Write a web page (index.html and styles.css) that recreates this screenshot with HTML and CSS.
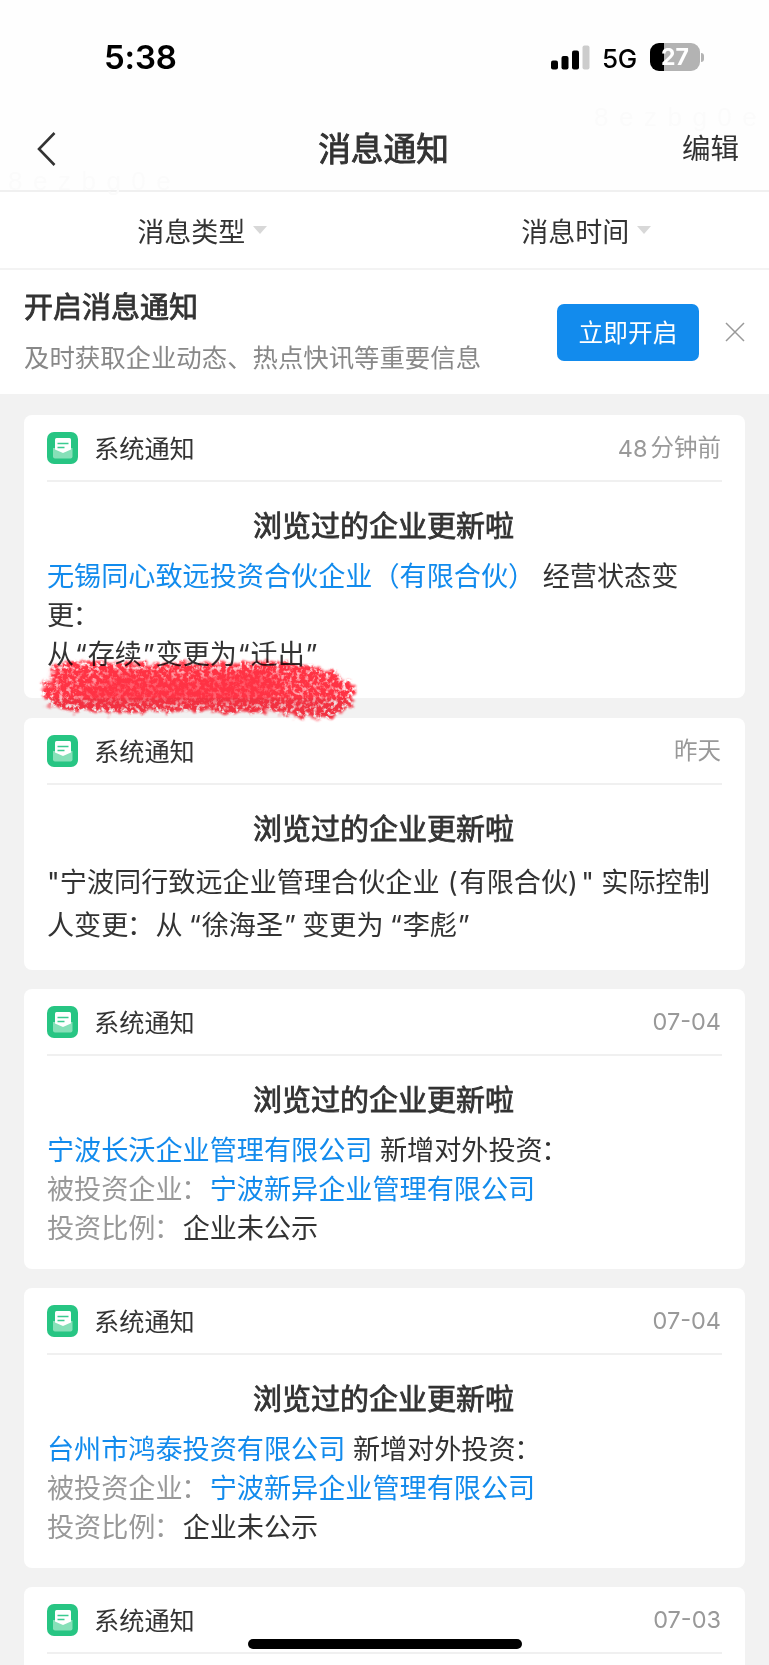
FILE: index.html
```html
<!DOCTYPE html>
<html lang="zh-CN">
<head>
<meta charset="utf-8">
<title>消息通知</title>
<link rel="stylesheet" href="styles.css">
</head>
<body>
<svg class="defs" width="0" height="0" aria-hidden="true">
  <symbol id="notice" viewBox="0 0 32 32">
    <rect width="31" height="32" rx="7" fill="#27c583"/>
    <path d="M6 16h19.500v8.500a2 2 0 0 1-2 2H8a2 2 0 0 1-2-2z" fill="#86e0b8"/>
    <path d="M8 7.500a1.500 1.500 0 0 1 1.500-1.500h13a1.500 1.500 0 0 1 1.500 1.500v10L16 21 8 17.500z" fill="#fff"/>
    <path d="M10.500 11.500h11M10.500 15.500h7" stroke="#3bcb90" stroke-width="1.600"/>
  </symbol>
</svg>
<div class="screen">
  <header class="top">
    <div class="status">
      <span class="clock">5:38</span>
      <div class="signals">
        <svg width="39" height="25" viewBox="0 0 39 25">
          <rect x="0" y="15.500" width="7" height="9" rx="2"/>
          <rect x="10.500" y="11" width="7" height="13.500" rx="2"/>
          <rect x="21" y="5.500" width="7" height="19" rx="2"/>
          <rect x="31.500" y="0.500" width="7" height="24" rx="2" fill="#ccc"/>
        </svg>
        <span class="net">5G</span>
        <div class="battery"><span>27</span></div>
      </div>
    </div>
    <nav class="nav">
      <svg class="back" width="22" height="36" viewBox="0 0 22 36"><path d="M18.500 2 3 18l15.500 16" fill="none" stroke="#333" stroke-width="2.600"/></svg>
      <h1>消息通知</h1>
      <span class="edit">编辑</span>
    </nav>
    <span class="mark mark-right">8ezbg0e</span>
    <span class="mark mark-left">8ezbg0e</span>
  </header>
  <div class="filters">
    <div class="filter">消息类型<i></i></div>
    <div class="filter">消息时间<i></i></div>
  </div>
  <section class="banner">
    <div class="banner-text">
      <h2>开启消息通知</h2>
      <p>及时获取企业动态、热点快讯等重要信息</p>
    </div>
    <button class="open">立即开启</button>
    <svg class="close" width="20" height="20" viewBox="0 0 20 20"><path d="M1 1l18 18M19 1 1 19" stroke="#999" stroke-width="1.500"/></svg>
  </section>
  <main class="list">
    <article class="card card-status">
      <div class="card-head"><svg class="icon"><use href="#notice"/></svg><span class="kind">系统通知</span><time><b>48</b>分钟前</time></div>
      <h3>浏览过的企业更新啦</h3>
      <div class="text"><a>无锡同心致远投资合伙企业（有限合伙）</a><span class="sp"></span>经营状态变<br>更<span class="colon">：</span><br>从<span class="q">“</span>存续<span class="q">”</span>变更为<span class="q">“</span>迁出<span class="q">”</span></div>
      <svg class="scribble" width="340" height="80" viewBox="0 0 340 80">
        <defs>
          <filter id="chalk" x="-5%" y="-10%" width="110%" height="120%" color-interpolation-filters="sRGB">
            <feTurbulence type="fractalNoise" baseFrequency="0.12 0.2" numOctaves="4" seed="8" result="n"/>
            <feDisplacementMap in="SourceGraphic" in2="n" scale="14" xChannelSelector="R" yChannelSelector="G" result="d"/>
            <feGaussianBlur in="d" stdDeviation="1.300" result="e"/>
            <feTurbulence type="fractalNoise" baseFrequency="0.24" numOctaves="3" seed="3"/>
            <feColorMatrix type="matrix" values="0 0 0 0 0  0 0 0 0 0  0 0 0 0 0  4 0 0 0 -1.100" result="m"/>
            <feComposite in="e" in2="m" operator="in"/>
            <feGaussianBlur stdDeviation="0.500"/>
          </filter>
          <filter id="soft" x="-5%" y="-20%" width="110%" height="140%">
            <feGaussianBlur stdDeviation="3.500"/>
          </filter>
        </defs>
        <path d="M24 18 250 17 300 26 316 38 306 50 284 60 254 58 40 54 22 46z" fill="#ff3344" opacity=".45" filter="url(#soft)"/>
        <path d="M22 14 44 12 90 13 250 12 302 20 328 38 320 56 300 68 270 69 245 62 130 62 40 62 18 54 11 42 14 34 22 28z" fill="#ff3344" filter="url(#chalk)"/>
        <path d="M90 24 160 30 230 20 252 36 236 52 60 52 44 42z" fill="#ff3344" opacity=".6" filter="url(#soft)"/>
      </svg>
    </article>
    <article class="card card-owner">
      <div class="card-head"><svg class="icon"><use href="#notice"/></svg><span class="kind">系统通知</span><time>昨天</time></div>
      <h3>浏览过的企业更新啦</h3>
      <div class="text"><span class="dq">"</span>宁波同行致远企业管理合伙企业<span class="lp">(</span>有限合伙<span class="rp">)</span><span class="dq">"</span><span class="sp"></span>实际控制<br>人变更<span class="colon">：</span>从<span class="sp narrow"></span><span class="q">“</span>徐海圣<span class="q">”</span><span class="sp narrow"></span>变更为<span class="sp narrow"></span><span class="q">“</span>李彪<span class="q">”</span></div>
    </article>
    <article class="card">
      <div class="card-head"><svg class="icon"><use href="#notice"/></svg><span class="kind">系统通知</span><time>07-04</time></div>
      <h3>浏览过的企业更新啦</h3>
      <div class="text"><a>宁波长沃企业管理有限公司</a><span class="sp"></span>新增对外投资<span class="colon">：</span><br><em>被投资企业<span class="colon">：</span></em><a>宁波新异企业管理有限公司</a><br><em>投资比例<span class="colon">：</span></em>企业未公示</div>
    </article>
    <article class="card">
      <div class="card-head"><svg class="icon"><use href="#notice"/></svg><span class="kind">系统通知</span><time>07-04</time></div>
      <h3>浏览过的企业更新啦</h3>
      <div class="text"><a>台州市鸿泰投资有限公司</a><span class="sp"></span>新增对外投资<span class="colon">：</span><br><em>被投资企业<span class="colon">：</span></em><a>宁波新异企业管理有限公司</a><br><em>投资比例<span class="colon">：</span></em>企业未公示</div>
    </article>
    <article class="card">
      <div class="card-head"><svg class="icon"><use href="#notice"/></svg><span class="kind">系统通知</span><time>07-03</time></div>
    </article>
  </main>
  <div class="home"></div>
</div>
</body>
</html>
```
FILE: styles.css
```css
* { box-sizing: border-box; margin: 0; padding: 0; }
body {
  font-family: Inter, "Noto Sans CJK SC", sans-serif;
  color: #333;
  background: #f2f2f2;
}
.defs { position: absolute; }
.screen {
  position: relative;
  width: 769px;
  height: 1665px;
  overflow: hidden;
  background: #f2f2f2;
}
.top {
  position: relative;
  height: 192px;
  background: #fefefe;
  border-bottom: 2px solid #f0f0f0;
}
.status {
  display: flex;
  justify-content: space-between;
  align-items: center;
  height: 115px;
  padding: 0 69px 0 104px;
  color: #000;
}
.clock { margin-top: -1px; font-size: 33px; font-weight: 600; letter-spacing: -0.200px; }
.signals { display: flex; align-items: center; }
.net { margin: 1px 13px 0 13px; font-size: 26px; font-weight: 500; letter-spacing: -0.300px; }
.signals > svg { margin-right: -1px; }
.battery {
  position: relative;
  width: 50px;
  height: 28px;
  margin-top: -1px;
  border-radius: 9px;
  background: linear-gradient(90deg, #000 14px, #b3b3b3 14px);
  color: #fff;
  font-size: 23px;
  font-weight: 700;
  line-height: 28px;
  text-align: center;
}
.battery::after {
  content: "";
  position: absolute;
  left: 51px;
  top: 10px;
  width: 3px;
  height: 9px;
  border-radius: 0 3px 3px 0;
  background: #b3b3b3;
}
.nav {
  display: grid;
  grid-template-columns: 1fr auto 1fr;
  align-items: center;
  height: 68px;
  padding: 0 30px 0 36px;
}
.back { margin-top: -1px; }
.nav h1 {
  margin-left: -8px;
  font-size: 32.700px;
  font-weight: 400;
  line-height: 68px;
  -webkit-text-stroke: 0.900px #333;
}
.edit { justify-self: end; font-size: 28.500px; line-height: 68px; }
.mark {
  position: absolute;
  font: 26px/30px "Liberation Sans", sans-serif;
  letter-spacing: 10.500px;
  color: #fbfbfb;
}
.mark-right { left: 594px; top: 102px; }
.mark-left { left: 8px; top: 166px; }
.filters {
  display: grid;
  grid-template-columns: 1fr 1fr;
  height: 78px;
  background: #fff;
  border-bottom: 2px solid #f3f3f3;
}
.filter {
  display: flex;
  align-items: center;
  justify-content: center;
  gap: 8px;
  padding-left: 20px;
  font-size: 27px;
}
.filter:nth-child(2) { padding-left: 19px; }
.filter i {
  border: 7px solid transparent;
  border-top: 8px solid #d8d8d8;
  border-bottom: 0;
}
.banner {
  display: flex;
  align-items: center;
  height: 124px;
  padding: 0 23px 0 24px;
  background: #fff;
}
.banner-text { flex: 1; padding-top: 2px; }
.banner h2 {
  font-size: 29px;
  font-weight: 400;
  line-height: 50px;
  -webkit-text-stroke: 0.800px #333;
}
.banner p { font-size: 25.400px; line-height: 50px; color: #888; }
.open {
  width: 142px;
  height: 57px;
  margin: 1px 27px 0 0;
  padding-top: 1px;
  border: 0;
  border-radius: 7px;
  background: #128bed;
  color: #fff;
  font: 24.700px/56px Inter, "Noto Sans CJK SC", sans-serif;
}
.close { margin: 0 1px 0 -1px; }
.list {
  display: flex;
  flex-direction: column;
  gap: 19px;
  padding: 21px 24px 0;
}
.card {
  position: relative;
  flex: none;
  height: 280px;
  padding: 0 23px;
  border-radius: 8px;
  background: #fff;
}
.card-status { height: 283px; margin-bottom: 1px; }
.card-owner { height: 252px; }
.card-head {
  display: flex;
  align-items: center;
  height: 67px;
  border-bottom: 2px solid #f0f0f0;
}
.icon { width: 32px; height: 32px; margin-top: 1px; }
.kind { flex: 1; margin: -1px 0 0 15px; font-size: 25.200px; }
time {
  display: flex;
  align-items: center;
  margin: 1px 1px 0 0;
  font-size: 23.500px;
  line-height: 34px;
  color: #999;
}
time b { margin: 1px 3px 0 0; font-weight: 400; }
.card h3 {
  margin-left: -2px;
  padding-top: 22px;
  font-size: 29px;
  font-weight: 400;
  line-height: 46px;
  text-align: center;
  -webkit-text-stroke: 0.800px #333;
}
.text {
  margin-top: 7px;
  font-size: 27.130px;
  line-height: 39px;
  white-space: nowrap;
}
.card-owner .text { margin-top: 8px; line-height: 43.300px; }
.text a { color: #128bed; }
.text em { font-style: normal; color: #999; }
.sp { display: inline-block; width: 7.500px; }
.narrow { width: 5.500px; }
.colon { display: inline-block; margin-right: 1.500px; text-indent: -1.500px; }
.q { display: inline-block; width: 13.600px; text-align: center; }
.dq { display: inline-block; width: 12.800px; text-align: center; }
.lp { display: inline-block; width: 18px; margin-right: 2px; text-align: right; }
.rp { display: inline-block; width: 13px; }
.scribble { position: absolute; left: 6px; top: 235px; z-index: 2; mix-blend-mode: multiply; }
.home {
  position: absolute;
  left: 248px;
  top: 1639px;
  width: 274px;
  height: 10px;
  border-radius: 5px;
  background: #000;
}
```
